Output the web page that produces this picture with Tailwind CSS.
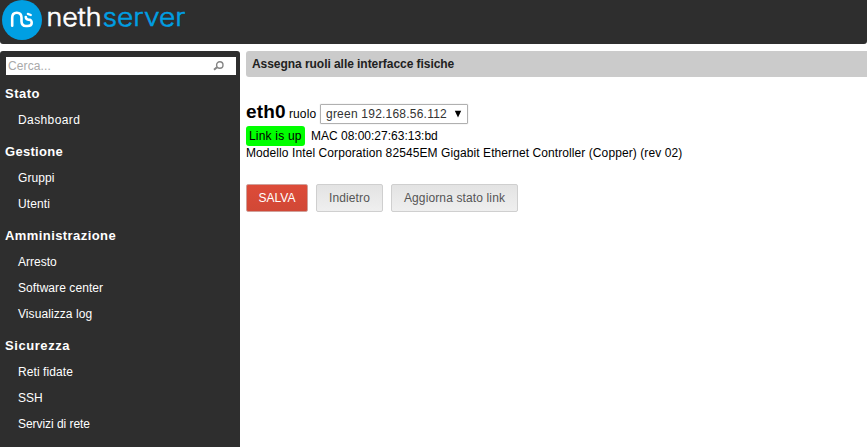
<!DOCTYPE html>
<html lang="it">
<head>
<meta charset="utf-8">
<title>NethServer</title>
<script src="https://cdn.jsdelivr.net/npm/@tailwindcss/browser@4"></script>
</head>
<body class="h-[447px] overflow-hidden bg-white font-['Liberation_Sans',Arial,sans-serif] text-xs text-black">
<header class="h-11 rounded-b-[3px] bg-[#2e2e2e]">
  <svg class="block" width="200" height="44" viewBox="0 0 200 44" role="img" aria-label="nethserver">
    <circle cx="22" cy="20" r="20" fill="#009fe3"/>
    <g fill="none" stroke="#fff" stroke-width="2.6" stroke-linecap="round">
      <path d="M12.2 25.8V17.8Q12.2 12.8 16.8 12.8T21.5 17.8V21.3Q21.6 26 26 26H27.5Q31.7 26 31.7 22.8T28.4 19.6Q25.9 19.4 25.8 17"/>
      <path d="M27.8 13.9L30.8 15" stroke-width="2.2"/>
    </g>
    <text class="font-['Inter',sans-serif] font-light" x="46.5" y="26" font-size="25" fill="#fff" stroke="#fff" stroke-width=".6" textLength="55" lengthAdjust="spacingAndGlyphs">neth</text>
    <text class="font-['Inter',sans-serif] font-light" x="102.5" y="26" font-size="25" fill="#009fe3" stroke="#009fe3" stroke-width=".5" textLength="83" lengthAdjust="spacingAndGlyphs">server</text>
  </svg>
</header>
<div class="mt-[7px] flex h-[396px] items-stretch gap-1.5">
  <aside class="w-60 shrink-0 rounded-t-[3px] bg-[#2e2e2e] pt-1.5 text-white">
    <div class="mr-1 ml-1.5 flex h-[18px] items-center justify-between bg-white pr-3 pl-[2px]">
      <span class="tracking-[0.1px] text-[#a9a9a9]">Cerca...</span>
      <svg width="11" height="10" viewBox="0 0 11 10" fill="none" stroke="#858585"><circle cx="6.8" cy="4" r="3.2" stroke-width="1.4"/><path d="M4 6.2L1 8.8" stroke-width="2"/></svg>
    </div>
    <nav class="mt-1.5 leading-[26px]">
      <h2 class="pl-[5px] text-[13px] font-bold tracking-[0.5px]">Stato</h2>
      <a class="block pl-[18px] tracking-[0.4px]">Dashboard</a>
      <h2 class="mt-1.5 pl-[5px] text-[13px] font-bold tracking-[0.3px]">Gestione</h2>
      <a class="block pl-[18px] tracking-[0.1px]">Gruppi</a>
      <a class="block pl-[18px] tracking-[0.1px]">Utenti</a>
      <h2 class="mt-1.5 pl-[5px] text-[13px] font-bold tracking-[0.42px]">Amministrazione</h2>
      <a class="block pl-[18px]">Arresto</a>
      <a class="block pl-[18px] tracking-[0.07px]">Software center</a>
      <a class="block pl-[18px] tracking-[0.08px]">Visualizza log</a>
      <h2 class="mt-1.5 pl-[5px] text-[13px] font-bold tracking-[0.57px]">Sicurezza</h2>
      <a class="block pl-[18px] tracking-[0.08px]">Reti fidate</a>
      <a class="block pl-[18px]">SSH</a>
      <a class="block pl-[18px] tracking-[-0.05px]">Servizi di rete</a>
    </nav>
  </aside>
  <main class="min-w-0 flex-1">
    <h1 class="h-[26px] rounded-l-[3px] bg-[#cbcbcb] pl-1.5 text-xs leading-[26px] font-bold tracking-[-0.05px] text-[#212121]">Assegna ruoli alle interfacce fisiche</h1>
    <div class="mt-[26px] flex h-[22px] items-center">
      <span class="relative -top-0.5 w-[39px] text-[19px] leading-[22px] font-bold tracking-[0.2px]">eth0</span>
      <span class="ml-1 w-[27px] leading-[22px] tracking-[0.1px]">ruolo</span>
      <div class="ml-[4px] flex h-5 w-[148px] items-center justify-between rounded-[1px] border border-[#b0b0b0] pr-[5px] pl-[5px] text-[#333] shadow-[0_0_1px_#aaa]">
        <span class="tracking-[0.22px]">green 192.168.56.112</span>
        <svg width="8" height="8" viewBox="0 0 8 8"><path d="M.8 .7H7.2L4 7.5Z" fill="#000"/></svg>
      </div>
    </div>
    <div class="mt-px flex h-5 items-center">
      <span class="h-5 w-[59px] rounded-[3px] bg-[#0f0] pl-[3px] leading-5 tracking-[0.2px]">Link is up</span>
      <span class="ml-1.5">MAC 08:00:27:63:13:bd</span>
    </div>
    <p class="h-[14px] leading-[14px] tracking-[0.085px]">Modello Intel Corporation 82545EM Gigabit Ethernet Controller (Copper) (rev 02)</p>
    <div class="mt-6 flex gap-2 leading-[26px]">
      <button class="h-7 w-[62px] rounded-[2px] border border-[#d0a09a] bg-linear-to-b from-[#dd4b39] to-[#d14836] text-white">SALVA</button>
      <button class="h-7 w-[67px] rounded-[2px] border border-[#cfcfcf] bg-linear-to-b from-[#e3e3e3] to-[#efefef] tracking-[0.1px] text-[#555]">Indietro</button>
      <button class="h-7 w-[127px] rounded-[2px] border border-[#cfcfcf] bg-linear-to-b from-[#e3e3e3] to-[#efefef] tracking-[0.13px] text-[#555]">Aggiorna stato link</button>
    </div>
  </main>
</div>
</body>
</html>
